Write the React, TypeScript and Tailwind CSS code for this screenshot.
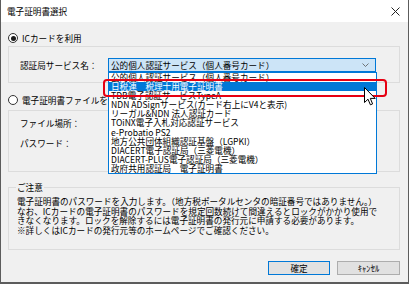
import React from 'react'

const services = [
  '公的個人認証サービス（個人番号カード）',
  '日税連　税理士用電子証明書',
  'TDB電子認証サービスTypeA',
  'NDN ADSignサービス(カード右上にV4と表示)',
  'リーガル&NDN 法人認証カード',
  'TOiNX電子入札対応認証サービス',
  'e-Probatio PS2',
  '地方公共団体組織認証基盤（LGPKI）',
  'DIACERT電子認証局（三菱電機）',
  'DIACERT-PLUS電子認証局（三菱電機）',
  '政府共用認証局　電子証明書',
]

const notes = [
  '電子証明書のパスワードを入力します。（地方税ポータルセンタの暗証番号ではありません。）',
  'なお、ICカードの電子証明書のパスワードを規定回数続けて間違えるとロックがかかり使用で',
  'きなくなります。ロックを解除するには電子証明書の発行元に申請する必要があります。',
  '※詳しくはICカードの発行元等のホームページでご確認ください。',
]

function Radio({ checked }: { checked?: boolean }) {
  return (
    <div className="w-[10px] h-[10px] rounded-full border border-[#333333] bg-white flex items-center justify-center">
      {checked && <div className="w-[5px] h-[5px] rounded-full bg-[#1a1a1a]" />}
    </div>
  )
}

export default function App() {
  return (
    <div className="relative w-[409px] h-[284px] flex flex-col bg-[#f0f0f0] border-x border-b-2 border-[#5c5c5c] overflow-hidden text-black text-[8.6px] leading-[10px] font-['Noto_Sans_CJK_JP',sans-serif]">
      {/* Title bar */}
      <div className="h-[22px] bg-white flex items-center justify-between pl-[6px] pr-[8px] shrink-0">
        <span>電子証明書選択</span>
        <svg width="9" height="9" viewBox="0 0 9 9">
          <path d="M0.5 0.5L8.5 8.5M8.5 0.5L0.5 8.5" stroke="#222" strokeWidth="1" />
        </svg>
      </div>

      <div className="flex-1 flex flex-col pl-[7px] pr-[8px]">
        {/* IC card */}
        <div className="mt-[10px] h-[12px] flex items-center gap-[4px]">
          <Radio checked />
          <span>ICカードを利用</span>
        </div>
        <div className="mt-[2px] h-[37px] border border-[#dcdcdc] pl-[11px] pt-[11px] flex items-start">
          <div className="w-[88px] h-[14px] flex items-center">認証局サービス名：</div>
          <div className="w-[268px] h-[14px] border border-[#0078d7] bg-[#cce4f7] flex items-center justify-between pl-[2px] pr-[6px]">
            <span>公的個人認証サービス（個人番号カード）</span>
            <svg width="7" height="4" viewBox="0 0 7 4">
              <path d="M0.5 0.5L3.5 3.5L6.5 0.5" stroke="#555" fill="none" strokeWidth="0.8" />
            </svg>
          </div>
        </div>

        {/* File */}
        <div className="mt-[11px] h-[12px] flex items-center gap-[4px]">
          <Radio />
          <span>電子証明書ファイルを利用</span>
        </div>
        <div className="mt-[4px] h-[62px] border border-[#dcdcdc] pl-[11px] pt-[6px] flex flex-col gap-[8px]">
          <div className="h-[12px] flex items-center">ファイル場所：</div>
          <div className="h-[12px] flex items-center">パスワード：</div>
        </div>

        {/* Notice */}
        <fieldset className="mt-[10px] h-[68px] border border-[#dcdcdc] px-[7px]">
          <legend className="px-[1px] leading-[10px]">ご注意</legend>
          <div className="pt-[5px] pl-[1px] leading-[9.5px] whitespace-nowrap">
            {notes.map((n) => (
              <div key={n}>{n}</div>
            ))}
          </div>
        </fieldset>

        {/* Buttons */}
        <div className="mt-[11px] flex justify-end gap-[7px]">
          <button className="w-[62px] h-[14px] border border-[#0078d7] bg-[#e1e1e1] flex items-center justify-center leading-none">
            確定
          </button>
          <button className="w-[63px] h-[14px] border border-[#adadad] bg-[#e1e1e1] flex items-center justify-center leading-none">
            ｷｬﾝｾﾙ
          </button>
        </div>
      </div>

      {/* Open dropdown list */}
      <div className="absolute left-[107px] top-[72px] w-[269px] border border-[#0078d7] bg-white">
        {services.map((s, i) => (
          <div
            key={s}
            className={`h-[9.1px] leading-[9.1px] pl-[2px] whitespace-nowrap ${i === 1 ? 'bg-[#0078d7] text-white' : ''}`}
          >
            {s}
          </div>
        ))}
      </div>

      {/* Highlight */}
      <div className="absolute left-[102px] top-[79px] w-[284px] h-[18px] border-2 border-[#e60012] rounded-[4px]" />

      {/* Mouse cursor */}
      <svg className="absolute left-[363px] top-[87px]" width="13" height="19" viewBox="0 0 13 19">
        <path
          d="M0.5 0.5L0.5 15.5L4 12.2L6.4 17.8L8.6 16.9L6.3 11.4L11.2 11.4Z"
          fill="white"
          stroke="black"
          strokeWidth="1"
          strokeLinejoin="round"
        />
      </svg>
    </div>
  )
}
